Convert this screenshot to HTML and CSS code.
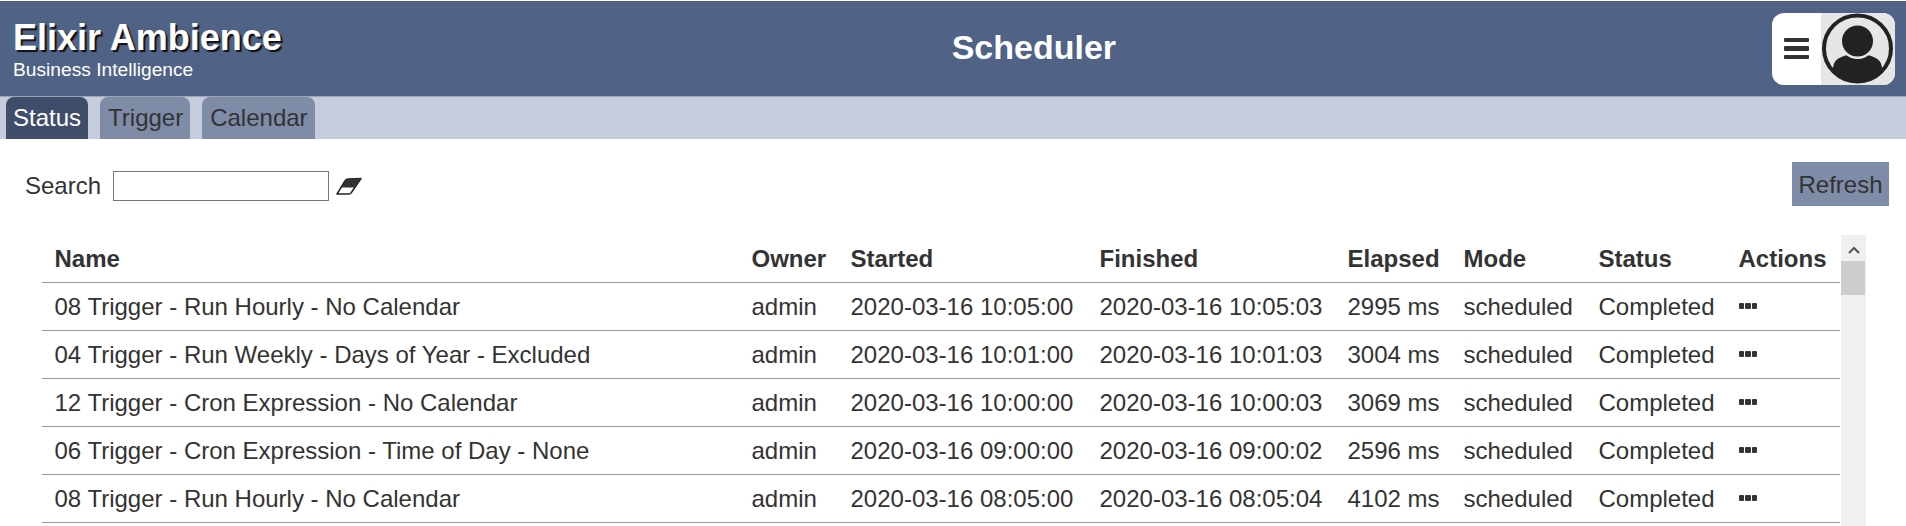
FILE: index.html
```html
<!DOCTYPE html>
<html lang="en">
<head>
  <meta charset="UTF-8" />
  <title>Scheduler</title>
  <link rel="stylesheet" href="styles.css">
</head>
<body>

<div class="header">
  <div class="brand">
    <div class="brand-name">Elixir Ambience</div>
    <div class="brand-sub">Business Intelligence</div>
  </div>
  <div class="page-title">Scheduler</div>
  <div class="user-menu">
    <div class="menu-part">
      <span class="bar"></span>
      <span class="bar"></span>
      <span class="bar"></span>
    </div>
    <svg class="avatar" viewBox="0 0 74 72" width="74" height="72">
      <rect width="74" height="72" fill="#e6e6e6"/>
      <ellipse cx="36.500" cy="35.500" rx="33.500" ry="33" fill="none" stroke="#222" stroke-width="4"/>
      <path d="M12 56 C12 48 17 44 27 42 L46 42 C56 44 61 48 61 56 C55 65 46 69 36.500 69 C27 69 18 65 12 56 Z" fill="#222"/>
      <circle cx="36.500" cy="28" r="18" fill="#e6e6e6"/>
      <circle cx="36.500" cy="28" r="15.500" fill="#222"/>
    </svg>
  </div>
</div>

<div class="tabs">
  <div class="tab active">Status</div>
  <div class="tab">Trigger</div>
  <div class="tab">Calendar</div>
</div>

<div class="toolbar">
  <div class="search">
    <label class="search-label">Search</label>
    <input class="search-input" type="text">
    <svg class="eraser" viewBox="0 0 26 18" width="26" height="18">
      <path d="M1 17 L9 4 Q10 2 12 2 L25 1.500 L15 16 Q14.500 17 13 17 Z" fill="#fff" stroke="#222" stroke-width="1.500" stroke-linejoin="round"/>
      <path d="M5.500 10.500 L9 4 Q10 2 12 2 L25.500 1 L19 10.500 Z" fill="#333"/>
    </svg>
  </div>
  <button class="refresh">Refresh</button>
</div>

<div class="table-wrap">
  <table>
    <tr>
      <th class="c-name">Name</th>
      <th class="c-owner">Owner</th>
      <th class="c-started">Started</th>
      <th class="c-finished">Finished</th>
      <th class="c-elapsed">Elapsed</th>
      <th class="c-mode">Mode</th>
      <th class="c-status">Status</th>
      <th>Actions</th>
    </tr>
    <tr>
      <td>08 Trigger - Run Hourly - No Calendar</td>
      <td>admin</td>
      <td>2020-03-16 10:05:00</td>
      <td>2020-03-16 10:05:03</td>
      <td>2995 ms</td>
      <td>scheduled</td>
      <td>Completed</td>
      <td><span class="dots"><i></i><i></i><i></i></span></td>
    </tr>
    <tr>
      <td>04 Trigger - Run Weekly - Days of Year - Excluded</td>
      <td>admin</td>
      <td>2020-03-16 10:01:00</td>
      <td>2020-03-16 10:01:03</td>
      <td>3004 ms</td>
      <td>scheduled</td>
      <td>Completed</td>
      <td><span class="dots"><i></i><i></i><i></i></span></td>
    </tr>
    <tr>
      <td>12 Trigger - Cron Expression - No Calendar</td>
      <td>admin</td>
      <td>2020-03-16 10:00:00</td>
      <td>2020-03-16 10:00:03</td>
      <td>3069 ms</td>
      <td>scheduled</td>
      <td>Completed</td>
      <td><span class="dots"><i></i><i></i><i></i></span></td>
    </tr>
    <tr>
      <td>06 Trigger - Cron Expression - Time of Day - None</td>
      <td>admin</td>
      <td>2020-03-16 09:00:00</td>
      <td>2020-03-16 09:00:02</td>
      <td>2596 ms</td>
      <td>scheduled</td>
      <td>Completed</td>
      <td><span class="dots"><i></i><i></i><i></i></span></td>
    </tr>
    <tr>
      <td>08 Trigger - Run Hourly - No Calendar</td>
      <td>admin</td>
      <td>2020-03-16 08:05:00</td>
      <td>2020-03-16 08:05:04</td>
      <td>4102 ms</td>
      <td>scheduled</td>
      <td>Completed</td>
      <td><span class="dots"><i></i><i></i><i></i></span></td>
    </tr>
  </table>
  <div class="scrollbar">
    <svg class="scroll-up" viewBox="0 0 12 8" width="12" height="8">
      <path d="M1 7 L6 2 L11 7" fill="none" stroke="#555" stroke-width="2"/>
    </svg>
    <div class="scroll-thumb"></div>
  </div>
</div>

</body>
</html>
```

FILE: styles.css
```css
html, body {
  height: 100%;
}
body {
  margin: 0;
  overflow: hidden;
  font-family: "Liberation Sans", Arial, sans-serif;
  color: #333;
  background-color: #fff;
}
.header {
  display: flex;
  justify-content: space-between;
  align-items: center;
  height: 95px;
  margin-top: 1px;
  padding: 0 11px 0 13px;
  background-color: #506285;
  border-bottom: 1px solid #a0a5ad;
}
.brand {
  margin-top: 1px;
}
.brand-name {
  font-size: 36px;
  font-weight: bold;
  line-height: 40px;
  color: #fff;
  text-shadow: 2px 2px 1px #111;
}
.brand-sub {
  margin-top: 1px;
  font-size: 19.200px;
  line-height: 22px;
  color: #fff;
}
.page-title {
  margin: 0 0 2px 14px;
  font-size: 34px;
  font-weight: bold;
  color: #fff;
}
.user-menu {
  display: flex;
  width: 123px;
  height: 72px;
  background-color: #fff;
  border-radius: 12px;
  overflow: hidden;
}
.menu-part {
  width: 49px;
  display: flex;
  flex-direction: column;
  align-items: center;
  justify-content: center;
  gap: 4px;
}
.bar {
  width: 25px;
  height: 4.500px;
  background-color: #333;
  border-radius: 1px;
}
.tabs {
  display: flex;
  gap: 12px;
  height: 42px;
  padding-left: 6px;
  background-color: #c5ccdb;
}
.tab {
  padding: 0 7px 0 8px;
  font-size: 24px;
  line-height: 42px;
  color: #333;
  background-color: #7f8ca8;
  border-radius: 8px 8px 0 0;
}
.tab.active {
  padding: 0 7px;
  color: #fff;
  background-color: #3f4d6b;
}
.toolbar {
  display: flex;
  justify-content: space-between;
  align-items: flex-start;
  height: 44px;
  margin-top: 23px;
  padding: 0 17px 0 25px;
}
.search {
  display: flex;
  align-items: center;
  height: 30px;
  margin-top: 9px;
}
.search-label {
  font-size: 24px;
  margin-right: 12px;
}
.search-input {
  box-sizing: border-box;
  width: 216px;
  height: 30px;
  margin: 0 7px 0 0;
  padding: 0;
  border: 1px solid #767676;
  background-color: #fff;
}
.refresh {
  width: 97px;
  height: 44px;
  padding: 2px 0 0;
  border: none;
  font-family: inherit;
  font-size: 24px;
  color: #333;
  background-color: #7f8ca8;
}
.table-wrap {
  display: flex;
  align-items: flex-start;
  margin-top: 28px;
  padding-left: 42px;
}
table {
  width: 1798px;
  table-layout: fixed;
  border-collapse: collapse;
  font-size: 24px;
}
th, td {
  box-sizing: border-box;
  height: 48px;
  padding: 1px 0 0 12.500px;
  text-align: left;
  white-space: nowrap;
  border-bottom: 1px solid #999;
}
th {
  padding-top: 3px;
  font-weight: bold;
}
.c-name { width: 697px; }
.c-owner { width: 99px; }
.c-started { width: 249px; }
.c-finished { width: 248px; }
.c-elapsed { width: 116px; }
.c-mode { width: 135px; }
.c-status { width: 140px; }
.dots {
  display: inline-flex;
  gap: 1px;
  vertical-align: 6px;
}
.dots i {
  width: 5.500px;
  height: 5.500px;
  background-color: #333;
  border-radius: 1px;
}
.scrollbar {
  flex: none;
  width: 25px;
  height: 300px;
  margin: 1px 0 0 1px;
  background-color: #f0f0f0;
}
.scroll-up {
  display: block;
  margin: 11px 0 7px 7px;
}
.scroll-thumb {
  width: 24px;
  height: 34px;
  background-color: #cdcdcd;
}
```
